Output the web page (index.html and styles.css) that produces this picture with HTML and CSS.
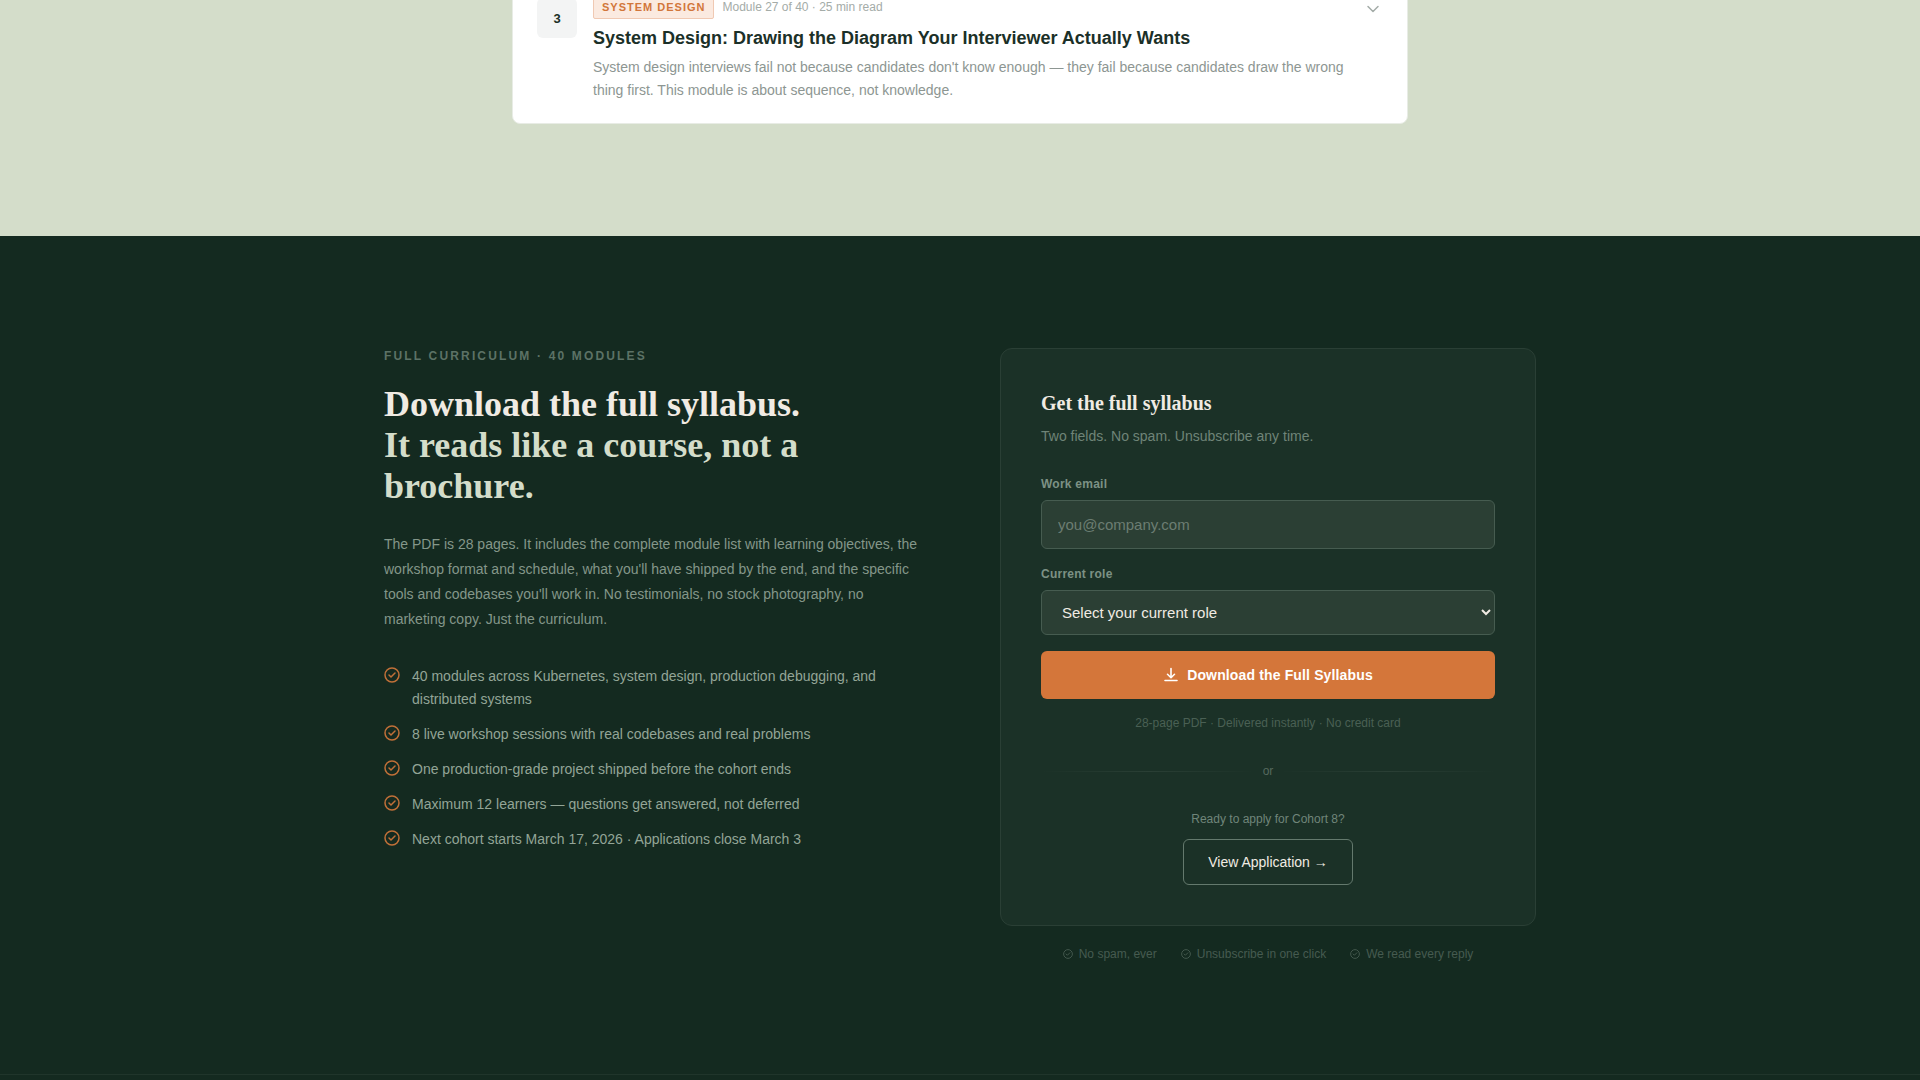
FILE: index.html
```html
<!DOCTYPE html>
<html lang="en">
<head>
<meta charset="utf-8">
<meta name="viewport" content="width=device-width, initial-scale=1">
<title>Full Syllabus</title>
<link rel="stylesheet" href="styles.css">
</head>
<body>
<svg class="sprite" aria-hidden="true">
  <symbol id="check" viewBox="0 0 16 16">
    <circle cx="8" cy="8" r="7" fill="none" stroke="currentColor" stroke-width="1.5"/>
    <path d="M5 8l2 2 4-4" fill="none" stroke="currentColor" stroke-width="1.5" stroke-linecap="round" stroke-linejoin="round"/>
  </symbol>
</svg>

<section class="modules">
  <article class="module">
    <div class="module-number">3</div>
    <div class="module-body">
      <div class="module-meta">
        <span class="tag">System Design</span>
        <span class="meta-text">Module 27 of 40 · 25 min read</span>
      </div>
      <h3 class="module-title">System Design: Drawing the Diagram Your Interviewer Actually Wants</h3>
      <p class="module-text">System design interviews fail not because candidates don't know enough — they fail because candidates draw the wrong thing first. This module is about sequence, not knowledge.</p>
    </div>
    <button class="module-toggle" type="button" aria-label="Expand module">
      <svg width="20" height="20" viewBox="0 0 20 20" fill="none" stroke="currentColor" stroke-width="1.5" stroke-linecap="round" stroke-linejoin="round"><path d="M5 7.500l5 5 5-5"/></svg>
    </button>
  </article>
</section>

<main class="syllabus">
  <div class="syllabus-grid">
    <div class="intro">
      <p class="eyebrow">Full Curriculum · 40 Modules</p>
      <h2 class="headline">Download the full syllabus.<br><span class="headline-soft">It reads like a course, not a brochure.</span></h2>
      <p class="lead">The PDF is 28 pages. It includes the complete module list with learning objectives, the workshop format and schedule, what you'll have shipped by the end, and the specific tools and codebases you'll work in. No testimonials, no stock photography, no marketing copy. Just the curriculum.</p>
      <ul class="features">
        <li><svg class="feature-icon"><use href="#check"/></svg><span>40 modules across Kubernetes, system design, production debugging, and distributed systems</span></li>
        <li><svg class="feature-icon"><use href="#check"/></svg><span>8 live workshop sessions with real codebases and real problems</span></li>
        <li><svg class="feature-icon"><use href="#check"/></svg><span>One production-grade project shipped before the cohort ends</span></li>
        <li><svg class="feature-icon"><use href="#check"/></svg><span>Maximum 12 learners — questions get answered, not deferred</span></li>
        <li><svg class="feature-icon"><use href="#check"/></svg><span>Next cohort starts March 17, 2026 · Applications close March 3</span></li>
      </ul>
    </div>

    <div class="signup">
      <div class="card">
        <h3 class="card-title">Get the full syllabus</h3>
        <p class="card-sub">Two fields. No spam. Unsubscribe any time.</p>
        <form class="form">
          <div class="field">
            <label for="email">Work email</label>
            <input id="email" type="email" placeholder="you@company.com">
          </div>
          <div class="field">
            <label for="role">Current role</label>
            <select id="role">
              <option>Select your current role</option>
              <option>Software Engineer</option>
              <option>Engineering Manager</option>
            </select>
          </div>
          <button class="submit" type="submit">
            <svg width="16" height="16" viewBox="0 0 16 16" fill="none" stroke="currentColor" stroke-width="1.6" stroke-linecap="round" stroke-linejoin="round"><path d="M8 1.500v9M4.500 7.300L8 10.700l3.500-3.400M2 13.500h12"/></svg>
            Download the Full Syllabus
          </button>
        </form>
        <p class="card-note">28-page PDF · Delivered instantly · No credit card</p>
        <div class="divider">or</div>
        <p class="apply-text">Ready to apply for Cohort 8?</p>
        <a class="apply-link" href="#apply">View Application →</a>
      </div>
      <ul class="trust">
        <li><svg class="trust-icon"><use href="#check"/></svg>No spam, ever</li>
        <li><svg class="trust-icon"><use href="#check"/></svg>Unsubscribe in one click</li>
        <li><svg class="trust-icon"><use href="#check"/></svg>We read every reply</li>
      </ul>
    </div>
  </div>
</main>
<footer class="footer"></footer>
</body>
</html>
```
FILE: styles.css
```css
*, *::before, *::after { box-sizing: border-box; }

body {
  margin: 0;
  min-height: 100vh;
  display: flex;
  flex-direction: column;
  background: #142a20;
  font-family: "Liberation Sans", Arial, sans-serif;
  font-size: 14px;
  color: #f0ebe3;
}

h2, h3, p, ul { margin: 0; padding: 0; }
ul { list-style: none; }
.sprite { position: absolute; width: 0; height: 0; }

/* Module list */
.modules {
  overflow: hidden;
  padding: 0 32px 112px;
  background: #d4ddca;
}
.module {
  display: flex;
  gap: 16px;
  max-width: 896px;
  margin: -30px auto 0;
  padding: 24px 24px 21px;
  border: 1px solid #e8ece5;
  border-radius: 8px;
  background: #fff;
}
.module-number {
  display: flex;
  align-items: center;
  justify-content: center;
  flex: none;
  width: 40px;
  height: 40px;
  margin-top: 3px;
  border-radius: 6px;
  background: #f3f4f4;
  color: #1b3028;
  font-size: 13px;
  font-weight: 700;
}
.module-body { flex: 1; }
.module-meta { display: flex; align-items: center; gap: 8px; margin-bottom: 8px; }
.tag {
  padding: 0 8px;
  border: 1px solid #f0c9b3;
  border-radius: 2px;
  background: #fbeae0;
  color: #d2763a;
  font-size: 11px;
  font-weight: 700;
  line-height: 22px;
  letter-spacing: 1px;
  text-transform: uppercase;
}
.meta-text { color: #a4aca8; font-size: 12px; }
.module-title { margin-bottom: 6px; color: #1b3028; font-size: 18px; line-height: 23px; }
.module-text { color: #8d9692; line-height: 23px; }
.module-toggle {
  align-self: flex-start;
  display: flex;
  margin-top: 4px;
  padding: 0;
  border: 0;
  background: none;
  color: #a4aca8;
}

/* Syllabus section */
.syllabus { padding: 112px 32px; }
.syllabus-grid {
  display: grid;
  grid-template-columns: 1fr 1fr;
  gap: 80px;
  max-width: 1152px;
  margin: 0 auto;
}
.eyebrow {
  margin-bottom: 20px;
  color: #5c7266;
  font-size: 12px;
  font-weight: 700;
  line-height: 16px;
  letter-spacing: 0.18em;
  text-transform: uppercase;
}
.headline {
  margin-bottom: 25px;
  font-family: "Liberation Serif", "Times New Roman", serif;
  font-size: 36px;
  line-height: 41px;
}
.headline-soft { color: #d4ddca; }
.lead { margin-bottom: 33px; color: #84978a; line-height: 25px; }
.features { display: grid; gap: 12px; color: #93a597; line-height: 23px; }
.features li { display: flex; gap: 12px; }
.feature-icon { flex: none; width: 16px; height: 16px; margin-top: 2px; color: #c07038; }

/* Signup card */
.card {
  padding: 40px;
  border: 1px solid #2a3f35;
  border-radius: 12px;
  background: #1b3127;
}
.card-title {
  margin-bottom: 8px;
  font-family: "Liberation Serif", "Times New Roman", serif;
  font-size: 20px;
  line-height: 28px;
}
.card-sub { margin-bottom: 28px; color: #6f8478; line-height: 22px; }
.form { display: grid; gap: 16px; }
.field { display: grid; gap: 6px; }
.field label { color: #7d9185; font-size: 12px; font-weight: 700; line-height: 19px; letter-spacing: 0.02em; }
.field input, .field select {
  width: 100%;
  margin: 0;
  padding: 0 16px;
  border: 1px solid #465c50;
  border-radius: 6px;
  background: #2b3f34;
  color: #f0ebe3;
  font-family: inherit;
  font-size: 15px;
}
.field input { height: 49px; }
.field select { height: 45px; }
.field input::placeholder { color: #6b7d72; opacity: 1; }
.submit {
  display: flex;
  align-items: center;
  justify-content: center;
  gap: 8px;
  height: 48px;
  padding: 0;
  border: 0;
  border-radius: 6px;
  background: #d4763a;
  color: #fff;
  font-family: inherit;
  font-size: 14px;
  font-weight: 700;
  letter-spacing: 0.01em;
}
.card-note, .divider, .apply-text { font-size: 12px; line-height: 19px; text-align: center; }
.card-note { margin: 15px 0 29px; color: #4a6054; }
.divider { display: flex; align-items: center; gap: 8px; margin-bottom: 29px; color: #56695e; }
.divider::before, .divider::after {
  content: "";
  flex: 1;
  height: 1px;
  background: linear-gradient(to right, transparent, #2a3f35, transparent);
}
.apply-text { margin-bottom: 10px; color: #70857a; }
.apply-link {
  display: block;
  width: fit-content;
  margin: 0 auto;
  padding: 0 24px;
  border: 1px solid #64796d;
  border-radius: 6px;
  color: #f0ebe3;
  line-height: 44px;
  text-decoration: none;
}
.trust {
  display: flex;
  justify-content: center;
  gap: 24px;
  margin-top: 20px;
  color: #465b50;
  font-size: 12px;
  line-height: 16px;
}
.trust li { display: flex; align-items: center; gap: 6px; }
.trust-icon { width: 10px; height: 10px; }

.footer { flex: 1; border-top: 1px solid #20352b; }
```
